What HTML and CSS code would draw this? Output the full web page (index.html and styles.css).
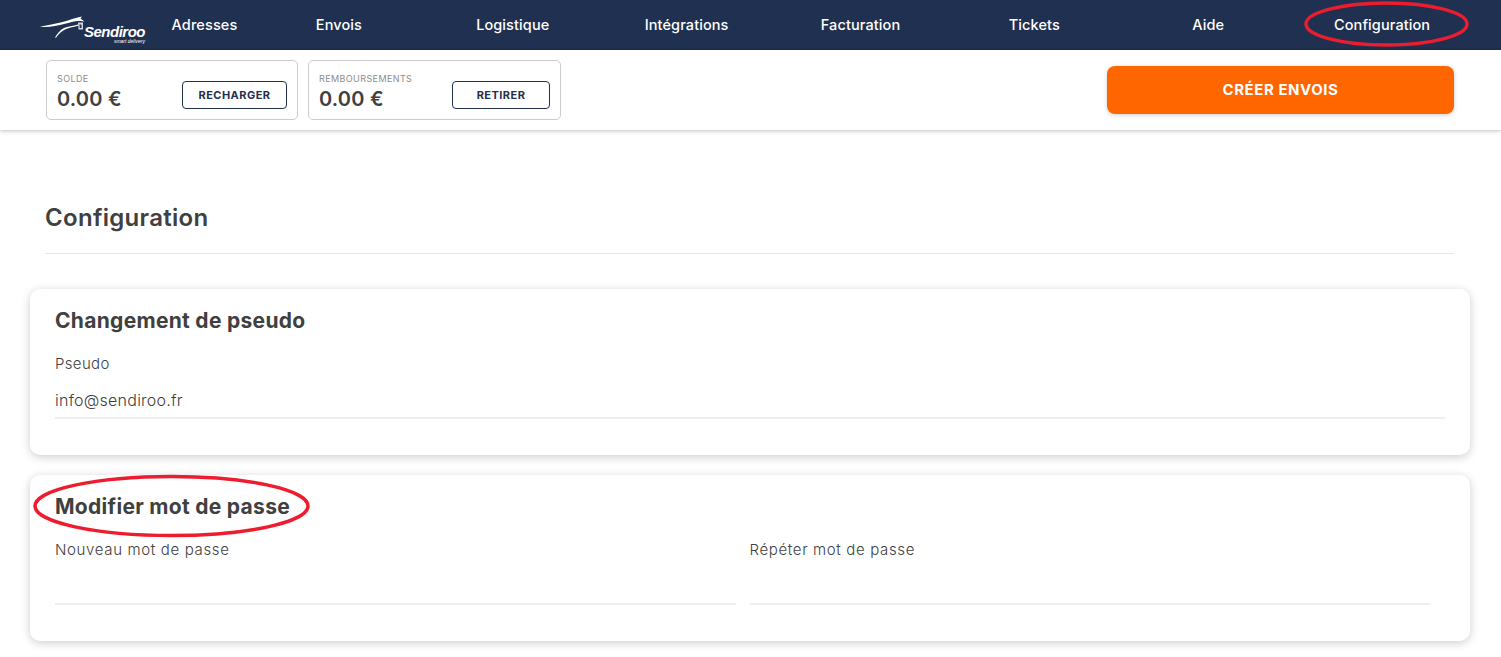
FILE: index.html
```html
<!DOCTYPE html>
<html lang="fr">
<head>
    <meta charset="utf-8">
    <meta name="viewport" content="width=device-width, initial-scale=1.0">
    <title>Sendiroo - Configuration</title>
    <link rel="stylesheet" href="styles.css">
</head>
<body>
    <nav class="topnav">
        <a class="logo" href="#">
            <svg class="logo-horse" viewBox="0 0 46 24" width="46" height="24">
                <path d="M0 10.7 C10 8.5 20 7 28 4.5 C31 3.5 36 1.5 42 0.5 L40.5 2.5 L44.5 5.5 L40.5 5 C35 4.5 30 6.5 25 7.8 C17 10 8 11.5 0 10.7 Z" fill="#fff"/>
                <path d="M15 21.5 C17 18 20 14 24 12 C28 10.5 33 10 38 8.5 L38 9.8 C33 11 28 12 25 13.5 C21 15.5 18 19 16 21.8 Z" fill="#fff"/>
                <path d="M38 6.5 L43 6.5 L43 13.5 L38.5 13.5 Z M39.5 8.5 L39.7 12 L41.5 12 L41.5 8.5 Z" fill="#fff" fill-rule="evenodd" opacity="0.8"/>
            </svg>
            <span class="logo-text">
                <span class="logo-name">Sendiroo</span>
                <span class="logo-sub">smart delivery</span>
            </span>
        </a>
        <a class="nav-link nav-first" href="#">Adresses</a>
        <a class="nav-link" href="#">Envois</a>
        <a class="nav-link" href="#">Logistique</a>
        <a class="nav-link" href="#">Intégrations</a>
        <a class="nav-link" href="#">Facturation</a>
        <a class="nav-link" href="#">Tickets</a>
        <a class="nav-link" href="#">Aide</a>
        <a class="nav-link" href="#">Configuration</a>
    </nav>

    <div class="subbar">
        <div class="balance balance-solde">
            <div class="balance-info">
                <div class="balance-label">SOLDE</div>
                <div class="balance-value">0.00 €</div>
            </div>
            <button class="outline-btn btn-recharger">RECHARGER</button>
        </div>
        <div class="balance balance-remb">
            <div class="balance-info">
                <div class="balance-label">REMBOURSEMENTS</div>
                <div class="balance-value">0.00 €</div>
            </div>
            <button class="outline-btn btn-retirer">RETIRER</button>
        </div>
        <button class="create-btn">CRÉER ENVOIS</button>
    </div>

    <main class="content">
        <h1 class="page-title">Configuration</h1>
        <hr class="page-rule">

        <section class="card card-pseudo">
            <h2 class="card-title">Changement de pseudo</h2>
            <label class="field-label">Pseudo</label>
            <div class="field-value">info@sendiroo.fr</div>
        </section>

        <section class="card card-password">
            <h2 class="card-title">Modifier mot de passe</h2>
            <div class="field-row">
                <div class="field">
                    <label class="field-label">Nouveau mot de passe</label>
                    <div class="field-value"></div>
                </div>
                <div class="field">
                    <label class="field-label">Répéter mot de passe</label>
                    <div class="field-value"></div>
                </div>
            </div>
        </section>
    </main>

    <!-- hand drawn red marks on top of the screenshot -->
    <svg class="mark mark-nav" viewBox="0 0 166 46" width="166" height="46">
        <ellipse cx="82.5" cy="23" rx="80.5" ry="21" fill="none" stroke="#ed1c2e" stroke-width="3.5"/>
    </svg>
    <svg class="mark mark-title" viewBox="0 0 278 64" width="278" height="64">
        <ellipse cx="138.5" cy="32" rx="136.5" ry="29.5" fill="none" stroke="#ed1c2e" stroke-width="3.5"/>
    </svg>
</body>
</html>
```

FILE: styles.css
```css
html, body { margin: 0; padding: 0; }
body {
    font-family: "Inter", "Liberation Sans", sans-serif;
    color: #404040;
    background-color: #fff;
    position: relative;
    min-height: 657px;
    overflow: hidden;
}

/* Top navigation */
.topnav {
    display: flex;
    align-items: center;
    height: 50px;
    padding: 0 32px 0 40px;
    background-color: #1f3050;
}
.logo {
    display: flex;
    align-items: flex-start;
    width: 117px;
    height: 40px;
    flex-shrink: 0;
    color: #fff;
    text-decoration: none;
}
.logo-horse { margin-top: 11px; margin-right: -2px; flex-shrink: 0; }
.logo-text { display: flex; flex-direction: column; align-items: flex-end; margin-top: 19px; }
.logo-name {
    font-family: "Liberation Sans", sans-serif;
    font-size: 15px;
    font-weight: bold;
    font-style: italic;
    line-height: 15px;
    letter-spacing: -0.5px;
}
.logo-sub {
    font-family: "Liberation Sans", sans-serif;
    font-size: 5px;
    font-style: italic;
    line-height: 4px;
}
.nav-link {
    width: 174px;
    margin-bottom: 1px;
    text-align: center;
    color: #fff;
    font-size: 14.5px;
    font-weight: 500;
    letter-spacing: 0.1px;
    text-decoration: none;
}
.nav-first { width: 95px; }

/* Balance bar */
.subbar {
    display: flex;
    align-items: center;
    height: 80px;
    padding: 0 47px 0 46px;
    box-sizing: border-box;
    box-shadow: 0 1px 4px rgba(0, 0, 0, 0.25);
    position: relative;
}
.balance {
    display: flex;
    justify-content: space-between;
    align-items: center;
    height: 60px;
    box-sizing: border-box;
    padding: 0 10px;
    border: 1px solid #ccc;
    border-radius: 5px;
    margin-right: 10px;
}
.balance-solde { width: 252px; }
.balance-remb { width: 253px; }
.balance-info { margin-top: 3px; }
.balance-label {
    margin-bottom: 2px;
    font-size: 9px;
    line-height: 12px;
    letter-spacing: 0.4px;
    color: #8c8c8c;
}
.balance-value {
    font-size: 20px;
    font-weight: 600;
    line-height: 24px;
    letter-spacing: 0.2px;
}
.outline-btn {
    height: 28px;
    padding: 0;
    margin-top: 10px;
    background-color: #fff;
    border: 1px solid #1f3050;
    border-radius: 4px;
    color: #1f3050;
    font-family: inherit;
    font-size: 11px;
    font-weight: 700;
    letter-spacing: 0.45px;
}
.btn-recharger { width: 105px; }
.btn-retirer { width: 98px; }
.create-btn {
    width: 347px;
    height: 48px;
    padding-bottom: 2px;
    margin-left: auto;
    border: none;
    border-radius: 8px;
    background-color: #ff6600;
    color: #fff;
    font-family: inherit;
    font-size: 15px;
    font-weight: 700;
    letter-spacing: 0.55px;
    box-shadow: 0 1px 4px rgba(0, 0, 0, 0.2);
}

/* Page */
.content { padding: 0 31px 0 30px; }
.page-title {
    margin: 0;
    padding: 72px 0 0 15px;
    font-size: 24px;
    font-weight: 600;
    line-height: 32px;
    letter-spacing: 0.3px;
}
.page-rule {
    margin: 19px 16px 35px 15px;
    border: none;
    border-top: 1px solid #e6e6e6;
}
.card {
    height: 166px;
    box-sizing: border-box;
    padding: 19px 25px 0;
    margin-bottom: 20px;
    border-radius: 10px;
    background-color: #fff;
    box-shadow: 0 2px 10px rgba(0, 0, 0, 0.2);
}
.card-title {
    margin: 0;
    font-size: 21px;
    font-weight: 700;
    line-height: 26px;
    letter-spacing: 0.3px;
}
.field-label {
    display: block;
    margin-top: 20px;
    font-size: 15px;
    line-height: 20px;
    letter-spacing: 0.65px;
    font-weight: 300;
}
.card-pseudo .field-label { letter-spacing: 0.35px; }
.field-value {
    height: 27px;
    margin-top: 16px;
    border-bottom: 2px solid #eee;
    font-size: 16px;
    line-height: 20px;
    font-weight: 300;
    letter-spacing: 0.25px;
}
.field-row { display: flex; gap: 14px; padding-right: 15px; }
.field { flex: 1; }

/* Red marks */
.mark { position: absolute; }
.mark-nav { left: 1304px; top: 1px; }
.mark-title { left: 33px; top: 474px; }
```
